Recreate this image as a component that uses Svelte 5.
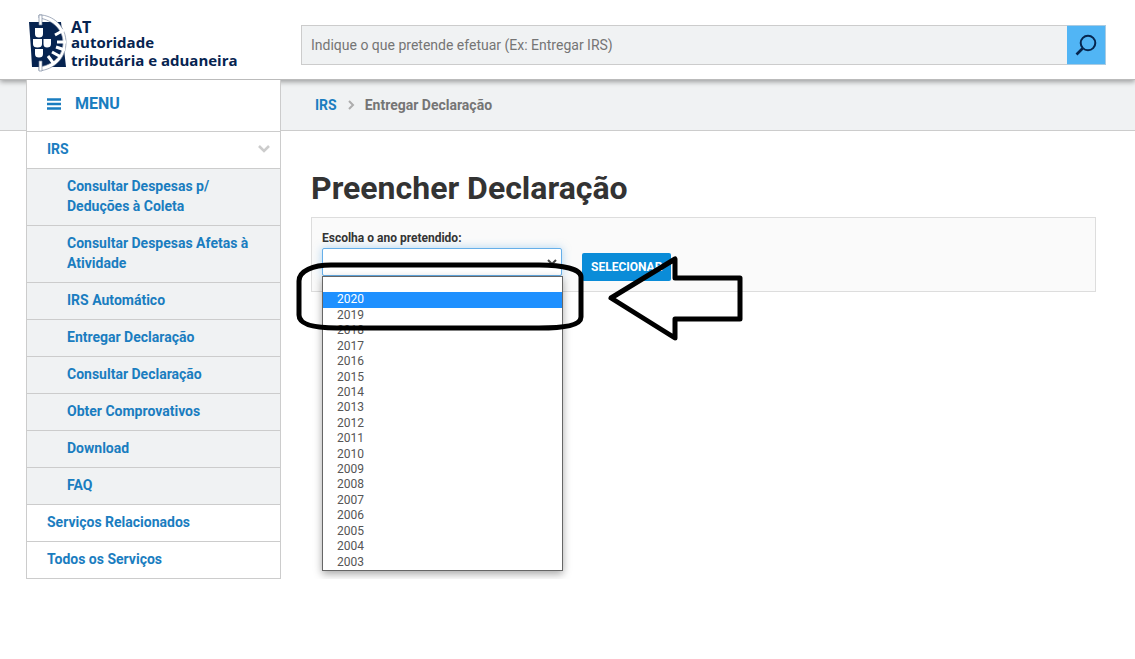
<script>
  const services = [
    'Consultar Despesas p/ Deduções à Coleta',
    'Consultar Despesas Afetas à Atividade',
    'IRS Automático',
    'Entregar Declaração',
    'Consultar Declaração',
    'Obter Comprovativos',
    'Download',
    'FAQ',
  ];

  // Most recent year first, down to 2003
  const years = Array.from({ length: 18 }, (_, i) => 2020 - i);

  let query = $state('');
  let year = $state('');
  let highlighted = $state(2020);
  let open = $state(true);

  function choose(value) {
    year = value;
    open = false;
  }
</script>

<header class="header">
  <a class="logo" href="#inicio">
    <svg class="emblem" viewBox="0 0 40 58" aria-hidden="true">
      <path d="M1 8 H33 L38 53 H4 L3 36 Z" fill="#062350" />
      <path
        d="M11 1 H14 C28 3 38 14 38 28.5 C38 43 28 54 14 56.5 H11 V53 C25 51 35 42 35 28.5 C35 16 25 6 11 4 Z"
        fill="#fff"
        stroke="#7d8aa0"
        stroke-width="0.7"
      />
      <path d="M11 1 H14 V11 H11 Z M11 47 H14 V57 H11 Z" fill="#fff" stroke="#7d8aa0" stroke-width="0.7" />
      <path
        d="M27 21 L36 16 M29 28 H38 M28 33 L37 36 M24 38 L33 43 M20 42 L26 50"
        stroke="#fff"
        stroke-width="3"
      />
      <g fill="#fff">
        <path d="M7 14 H15 V20 Q15 23.500 11 23.500 Q7 23.500 7 20 Z" />
        <path d="M5 25 H14 V30 Q14 33.500 9.500 33.500 Q5 33.500 5 30 Z" />
        <path d="M15.500 25 H23 V30 Q23 33.500 19 33.500 Q15.500 33.500 15.500 30 Z" />
        <path d="M7 35 H15 V40 Q15 43.500 11 43.500 Q7 43.500 7 40 Z" />
      </g>
    </svg>
    <span class="logo-text">
      <span class="logo-short">AT</span>
      <span>autoridade</span>
      <span class="logo-last">tributária e aduaneira</span>
    </span>
  </a>
  <form class="search" role="search" onsubmit={(e) => e.preventDefault()}>
    <input
      type="search"
      aria-label="Pesquisar"
      placeholder="Indique o que pretende efetuar (Ex: Entregar IRS)"
      bind:value={query}
    />
    <button type="submit" aria-label="Pesquisar">
      <svg viewBox="0 0 22 22" width="22" height="22" aria-hidden="true">
        <circle cx="13" cy="9" r="7.3" fill="none" stroke="#06264f" stroke-width="2" />
        <path d="M7.5 14.5 L1.5 20.5" stroke="#06264f" stroke-width="2.6" />
      </svg>
    </button>
  </form>
</header>

<div class="page">
  <nav class="crumbs" aria-label="Localização">
    <a href="#irs">IRS</a>
    <svg viewBox="0 0 8 10" width="8" height="10" aria-hidden="true">
      <path d="M2 1 L6 5 L2 9" fill="none" stroke="#adadad" stroke-width="2" />
    </svg>
    <span>Entregar Declaração</span>
  </nav>

  <nav class="menu" aria-label="Menu">
    <button class="menu-title" type="button">
      <svg viewBox="0 0 14 12" width="14" height="12" aria-hidden="true">
        <path d="M0 1.5 H14 M0 6 H14 M0 10.5 H14" stroke="#1a7dc0" stroke-width="2.4" />
      </svg>
      MENU
    </button>
    <a class="menu-item" href="#irs">
      IRS
      <svg viewBox="0 0 12 8" width="12" height="8" aria-hidden="true">
        <path d="M1 1 L6 6 L11 1" fill="none" stroke="#ccc" stroke-width="2.6" />
      </svg>
    </a>
    <ul class="submenu">
      {#each services as service}
        <li><a class="menu-item" href="#servico">{service}</a></li>
      {/each}
    </ul>
    <a class="menu-item" href="#relacionados">Serviços Relacionados</a>
    <a class="menu-item" href="#todos">Todos os Serviços</a>
  </nav>

  <main class="content">
    <h1>Preencher Declaração</h1>
    <form class="panel" onsubmit={(e) => e.preventDefault()}>
      <div class="field">
        <label for="year">Escolha o ano pretendido:</label>
        <div class="select">
          <select id="year" bind:value={year}>
            <option value=""></option>
            {#each years as y}
              <option value={y}>{y}</option>
            {/each}
          </select>
          <svg class="caret" viewBox="0 0 10 8" width="10" height="8" aria-hidden="true">
            <path d="M1 1 L5 5 L9 1" fill="none" stroke="#444" stroke-width="2" />
          </svg>
          {#if open}
            <div class="options" role="listbox" aria-label="Ano">
              <button type="button" role="option" aria-selected="false" aria-label="Nenhum" onclick={() => choose('')}></button>
              {#each years as y}
                <button
                  type="button"
                  role="option"
                  aria-selected={y === highlighted}
                  class:highlighted={y === highlighted}
                  onmouseenter={() => (highlighted = y)}
                  onclick={() => choose(y)}
                >{y}</button>
              {/each}
            </div>
          {/if}
          <!-- Hand-drawn hint around the most recent year -->
          <svg class="hint" viewBox="0 0 452 90" width="452" height="90" aria-hidden="true">
            <path
              d="M38 13 H246 C270 13 288 17 288 25 V65 C288 73 272 76 246 76 H44 C20 76 6 72 6 63 V29 C6 19 20 13 38 13 Z"
            />
            <path d="M318 46 L382 7 V26 H447 V67 H382 V86 Z" />
          </svg>
        </div>
      </div>
      <button class="submit" type="submit">SELECIONAR</button>
    </form>
  </main>
</div>

<style>
  :global(body) {
    margin: 0;
    color: #333;
    font-family: Roboto, sans-serif;
    font-size: 14px;
    line-height: 20px;
    background: #fff;
  }

  a {
    color: #1a7dc0;
    text-decoration: none;
  }

  button,
  input,
  select {
    font-family: inherit;
  }

  .header {
    position: relative;
    display: grid;
    grid-template-columns: 273px 1fr;
    align-items: center;
    box-sizing: border-box;
    min-height: 80px;
    padding: 10px 29px 0 28px;
    border-bottom: 1px solid #bbb;
    box-shadow: 0 2px 5px rgba(0, 0, 0, 0.35);
  }

  .logo {
    display: flex;
    gap: 3px;
    margin-top: -4px;
    color: #062350;
    font-family: "Open Sans", sans-serif;
    font-size: 15px;
    font-weight: 700;
    line-height: 16px;
  }

  .emblem {
    width: 40px;
    height: 58px;
  }

  .logo-text {
    display: flex;
    flex-direction: column;
    padding-top: 6px;
    white-space: nowrap;
  }

  .logo-short {
    font-size: 16px;
    line-height: 14px;
  }

  .logo-last {
    margin-top: 2px;
  }

  .search {
    display: flex;
    height: 40px;
  }

  .search input {
    flex: 1;
    min-width: 0;
    box-sizing: border-box;
    padding: 0 9px;
    color: #555;
    font-size: 14px;
    background: #f0f2f3;
    border: 1px solid #ccc;
    border-right: 0;
    border-radius: 0;
    appearance: none;
  }

  .search input::placeholder {
    color: #757575;
  }

  .search button {
    display: grid;
    place-items: center;
    width: 39px;
    padding: 0;
    background: #51b5f5;
    border: 1px solid #a9cbe2;
    border-left: 0;
  }

  .page {
    display: grid;
    grid-template-columns: 281px 1fr;
    grid-template-rows: auto 1fr;
  }

  .crumbs {
    display: flex;
    grid-row: 1;
    grid-column: 1 / -1;
    gap: 10px;
    align-items: center;
    height: 50px;
    padding-left: 315px;
    color: #757575;
    font-weight: 700;
    background: #f0f2f3;
    border-bottom: 1px solid #ccc;
  }

  .menu {
    position: relative;
    grid-row: 1 / 3;
    grid-column: 1;
    align-self: start;
    margin-left: 26px;
    font-weight: 700;
    background: #fff;
    border: solid #ccc;
    border-width: 0 1px;
  }

  .menu-title {
    display: flex;
    gap: 14px;
    align-items: center;
    width: 100%;
    height: 52px;
    padding: 0 20px 4px;
    color: #1a7dc0;
    font-size: 16px;
    font-weight: 700;
    background: #fff;
    border: 0;
    border-bottom: 1px solid #ccc;
  }

  .menu-item {
    display: flex;
    align-items: center;
    justify-content: space-between;
    padding: 7px 10px 9px 20px;
    border-bottom: 1px solid #ccc;
  }

  .submenu {
    margin: 0;
    padding: 0;
    list-style: none;
    background: #f0f2f3;
  }

  .submenu .menu-item {
    padding-right: 30px;
    padding-left: 40px;
  }

  .content {
    grid-row: 2;
    grid-column: 2;
    padding: 37px 39px 40px 30px;
  }

  h1 {
    margin: 0 0 9px;
    font-size: 32px;
    font-weight: 700;
    line-height: 40px;
  }

  .panel {
    display: flex;
    gap: 20px;
    align-items: flex-end;
    padding: 10px;
    background: #fafafa;
    border: 1px solid #ddd;
  }

  .field {
    width: 240px;
    padding-bottom: 5px;
  }

  label {
    display: block;
    font-size: 12px;
    font-weight: 700;
  }

  .select {
    position: relative;
  }

  select {
    display: block;
    width: 100%;
    height: 28px;
    padding: 0 10px;
    background: #fff;
    border: 1px solid #66afe9;
    border-radius: 2px;
    box-shadow: 0 0 8px rgba(102, 175, 233, 0.5);
    appearance: none;
  }

  .caret {
    position: absolute;
    top: 11px;
    right: 5px;
  }

  .options {
    position: absolute;
    top: 28px;
    left: 0;
    display: grid;
    grid-auto-rows: 1fr;
    width: 239px;
    height: 293px;
    background: #fff;
    border: 1px solid #666;
    box-shadow: 0 3px 8px rgba(0, 0, 0, 0.35);
  }

  .options button {
    min-height: 0;
    padding: 0 14px 2px;
    color: #555;
    font-size: 12px;
    line-height: 14px;
    text-align: left;
    background: none;
    border: 0;
  }

  .options .highlighted {
    color: #fff;
    background: #1e90ff;
  }

  .hint {
    position: absolute;
    top: 4px;
    left: -29px;
    fill: none;
    stroke: #000;
    stroke-width: 5;
    stroke-linejoin: round;
    pointer-events: none;
  }

  .submit {
    height: 28px;
    padding: 0 9px;
    color: #fff;
    font-size: 12px;
    font-weight: 700;
    background: #0a8cd8;
    border: 0;
    border-radius: 2px;
  }
</style>
